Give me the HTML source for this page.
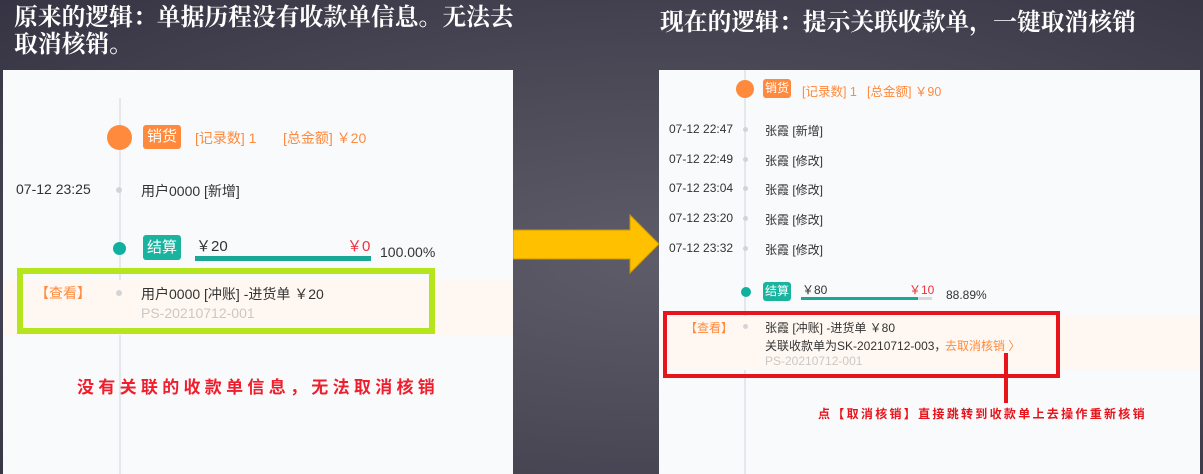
<!DOCTYPE html>
<html><head><meta charset="utf-8"><style>
*{margin:0;padding:0;box-sizing:border-box}
body{width:1203px;height:474px;overflow:hidden;position:relative;font-family:"Liberation Sans","Noto Sans CJK SC",sans-serif;
background:radial-gradient(ellipse at 55% 55%,#5e5c69 0%,#4d4b58 45%,#363443 100%);}
.a{position:absolute;white-space:nowrap}
.t{font-family:"Liberation Serif","Noto Serif CJK SC",serif;font-weight:bold;color:#fff;font-size:23.8px;line-height:27px}
.panel{position:absolute;background:#f9fafc;top:70px;height:404px}
.line{position:absolute;width:2px;background:#e6e7ea}
.dot{position:absolute;border-radius:50%;background:#d4d4d8}
.or{color:#ff8a3d}
.badge{position:absolute;color:#fff;text-align:center;border-radius:3px}
</style></head><body>
<div class="a t" style="left:14px;top:5px">原来的逻辑：单据历程没有收款单信息。无法去</div>
<div class="a t" style="left:14px;top:32px">取消核销。</div>
<div class="a t" style="left:660px;top:10px">现在的逻辑：提示关联收款单，一键取消核销</div>

<!-- left panel -->
<div class="panel" style="left:3px;width:510px"></div>
<div class="line" style="left:119px;top:98px;height:376px"></div>
<div class="a" style="left:3px;top:280px;width:510px;height:55px;background:#fff8f2"></div>
<div class="a" style="left:17px;top:268px;width:418px;height:66px;border:6px solid #b5e61d"></div>
<div class="dot" style="left:107px;top:125px;width:25px;height:25px;background:#ff8a3d"></div>
<div class="badge" style="left:143px;top:125px;width:38px;height:24px;background:#ff8a3d;font-size:15px;line-height:24px">销货</div>
<div class="a or" style="left:195px;top:128px;font-size:14px">[记录数] 1</div>
<div class="a or" style="left:283px;top:128px;font-size:14px">[总金额] ￥20</div>
<div class="a" style="left:16px;top:181px;font-size:14px;color:#333">07-12 23:25</div>
<div class="dot" style="left:116px;top:187px;width:6px;height:6px"></div>
<div class="a" style="left:141px;top:181px;font-size:14px;color:#333">用户0000 [新增]</div>
<div class="dot" style="left:113px;top:242px;width:13px;height:13px;background:#0fb09f"></div>
<div class="badge" style="left:143px;top:235px;width:38px;height:25px;background:#1ab3a0;font-size:15px;line-height:25px">结算</div>
<div class="a" style="left:196px;top:235px;font-size:15px;color:#333">￥20</div>
<div class="a" style="left:347px;top:235px;font-size:15px;color:#f0303c">￥0</div>
<div class="a" style="left:195px;top:256px;width:176px;height:5px;background:#1aa795"></div>
<div class="a" style="left:380px;top:244px;font-size:14px;color:#333">100.00%</div>
<div class="a or" style="left:35px;top:283px;font-size:14px">【查看】</div>
<div class="dot" style="left:116px;top:290px;width:6px;height:6px"></div>
<div class="a" style="left:141px;top:284px;font-size:14px;color:#333">用户0000 [冲账] -进货单 ￥20</div>
<div class="a" style="left:141px;top:305px;font-size:14px;color:#c8c8c8">PS-20210712-001</div>
<div class="a" style="left:77px;top:373px;font-size:17px;font-weight:bold;color:#f01e2c;letter-spacing:4.3px">没有关联的收款单信息，无法取消核销</div>

<!-- arrow -->
<svg class="a" style="left:513px;top:213px" width="148" height="62"><polygon points="0,17 117,17 117,2 146,31 117,60 117,46 0,46" fill="#ffc000" stroke="#c99700" stroke-width="1"/></svg>

<!-- right panel -->
<div class="panel" style="left:659px;width:541px"></div>
<div class="line" style="left:744px;top:70px;height:404px"></div>
<div class="a" style="left:659px;top:316px;width:541px;height:54px;background:#fff8f2"></div>
<div class="a" style="left:663px;top:311px;width:397px;height:67px;border:4px solid #e8141c"></div>
<div class="dot" style="left:736px;top:80px;width:18px;height:18px;background:#ff8a3d"></div>
<div class="badge" style="left:763px;top:79px;width:28px;height:19px;background:#ff8a3d;font-size:12px;line-height:19px">销货</div>
<div class="a or" style="left:802px;top:81px;font-size:12.5px">[记录数] 1</div>
<div class="a or" style="left:867px;top:81px;font-size:12.5px">[总金额] ￥90</div>
<div class="a" style="left:669px;top:122px;font-size:12px;color:#333">07-12 22:47</div><div class="dot" style="left:743px;top:127px;width:5px;height:5px"></div><div class="a" style="left:765px;top:122px;font-size:12px;color:#333">张霞 [新增]</div>
<div class="a" style="left:669px;top:152px;font-size:12px;color:#333">07-12 22:49</div><div class="dot" style="left:743px;top:157px;width:5px;height:5px"></div><div class="a" style="left:765px;top:152px;font-size:12px;color:#333">张霞 [修改]</div>
<div class="a" style="left:669px;top:181px;font-size:12px;color:#333">07-12 23:04</div><div class="dot" style="left:743px;top:186px;width:5px;height:5px"></div><div class="a" style="left:765px;top:181px;font-size:12px;color:#333">张霞 [修改]</div>
<div class="a" style="left:669px;top:211px;font-size:12px;color:#333">07-12 23:20</div><div class="dot" style="left:743px;top:216px;width:5px;height:5px"></div><div class="a" style="left:765px;top:211px;font-size:12px;color:#333">张霞 [修改]</div>
<div class="a" style="left:669px;top:241px;font-size:12px;color:#333">07-12 23:32</div><div class="dot" style="left:743px;top:246px;width:5px;height:5px"></div><div class="a" style="left:765px;top:241px;font-size:12px;color:#333">张霞 [修改]</div>
<div class="dot" style="left:741px;top:287px;width:10px;height:10px;background:#0fb09f"></div>
<div class="badge" style="left:763px;top:282px;width:28px;height:19px;background:#1ab3a0;font-size:12px;line-height:19px">结算</div>
<div class="a" style="left:802px;top:281px;font-size:12px;color:#333">￥80</div>
<div class="a" style="left:909px;top:281px;font-size:12px;color:#f0303c">￥10</div>
<div class="a" style="left:801px;top:297px;width:131px;height:3px;background:#d8d8d8"></div>
<div class="a" style="left:801px;top:297px;width:117px;height:3px;background:#1aa795"></div>
<div class="a" style="left:946px;top:288px;font-size:12px;color:#333">88.89%</div>
<div class="a or" style="left:685px;top:319px;font-size:12px">【查看】</div>
<div class="dot" style="left:743px;top:324px;width:5px;height:5px"></div>
<div class="a" style="left:765px;top:319px;font-size:12px;color:#333">张霞 [冲账] -进货单 ￥80</div>
<div class="a" style="left:765px;top:337px;font-size:12px;color:#333">关联收款单为SK-20210712-003，</div>
<div class="a or" style="left:945px;top:337px;font-size:12px">去取消核销 〉</div>
<div class="a" style="left:765px;top:354px;font-size:12px;color:#c8c8c8">PS-20210712-001</div>
<div class="a" style="left:1004px;top:353px;width:4px;height:50px;background:#e8141c"></div>
<div class="a" style="left:818px;top:405px;font-size:12px;font-weight:bold;color:#e8141c;letter-spacing:2.3px">点【取消核销】直接跳转到收款单上去操作重新核销</div>
</body></html>
